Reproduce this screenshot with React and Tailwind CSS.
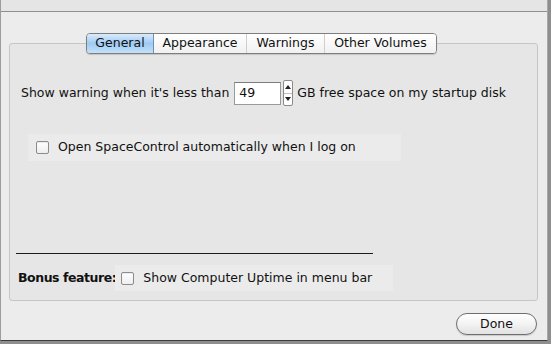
import React from "react";

const font = { fontFamily: '"DejaVu Sans", "Liberation Sans", sans-serif' };

const Checkbox = () => (
  <div className="w-[13px] h-[13px] shrink-0 rounded-[2px] border border-[#8c8c8c] bg-gradient-to-b from-[#ffffff] to-[#eeeeee] shadow-[inset_0_1px_1px_rgba(0,0,0,0.08)]" />
);

const tabs = ["General", "Appearance", "Warnings", "Other Volumes"];

const Tabs = () => (
  <div className="flex h-[21px] ml-[85px] relative z-10 rounded-[4px] border border-[#7e7e7e] overflow-hidden shadow-[0_1px_1px_rgba(0,0,0,0.15)] w-fit">
    {tabs.map((t, i) =>
      i === 0 ? (
        <div
          key={t}
          className="w-[67px] flex items-center justify-center text-[12.5px] text-[#111] bg-gradient-to-b from-[#d8ebfc] via-[#9fcaf3] to-[#c4e2fa] border-r border-[#6f8fb4]"
        >
          {t}
        </div>
      ) : (
        <div
          key={t}
          className={
            "flex items-center justify-center text-[12.5px] text-[#111] bg-gradient-to-b from-[#ffffff] to-[#f1f1f1] " +
            (i === 1 ? "w-[93px] border-r border-[#cfcfcf]" : i === 2 ? "w-[78px] border-r border-[#cfcfcf]" : "w-[111px]")
          }
        >
          {t}
        </div>
      )
    )}
  </div>
);

const Stepper = () => (
  <div className="w-[10px] h-[26px] flex flex-col border border-[#8a8a8a] rounded-[2px] bg-white">
    <div className="flex-1 flex items-center justify-center border-b border-[#bdbdbd]">
      <div className="w-0 h-0 border-l-[3px] border-r-[3px] border-b-[4px] border-l-transparent border-r-transparent border-b-[#222]" />
    </div>
    <div className="flex-1 flex items-center justify-center">
      <div className="w-0 h-0 border-l-[3px] border-r-[3px] border-t-[4px] border-l-transparent border-r-transparent border-t-[#222]" />
    </div>
  </div>
);

export default function App() {
  return (
    <div className="w-[551px] h-[344px] bg-[#8e8e8e] overflow-hidden" style={font}>
      <div className="w-[548px] h-[341px] flex flex-col bg-[#ececec] border-l border-r border-b border-l-[#9c9c9c] border-r-[#a8a8a8] border-b-[#3c3c3c]">
        <div className="h-[12px] bg-[#e5e5e5] border-b border-[#8f8f8f] shrink-0" />
        <div className="pt-[21px] flex flex-col">
          <Tabs />
          <div className="ml-[8px] -mt-[11px] w-[529px] h-[258px] rounded-[3px] border border-[#c6c6c6] bg-[#e6e6e6] flex flex-col">
            <div className="mt-[36px] pl-[11px] flex items-center text-[12.5px] text-[#111]">
              <span>Show warning when it's less than</span>
              <div className="ml-[5px] w-[47px] h-[23px] bg-white border border-[#9a9a9a] border-t-[#7c7c7c] flex items-center pl-[4px]">
                49
              </div>
              <div className="ml-[2px]">
                <Stepper />
              </div>
              <span className="ml-[4px]">GB free space on my startup disk</span>
            </div>
            <div className="mt-[28px] ml-[18px] w-[373px] h-[27px] bg-[#ebebeb] flex items-center pl-[8px] text-[12.5px] text-[#111]">
              <Checkbox />
              <span className="ml-[9px]">Open SpaceControl automatically when I log on</span>
            </div>
            <div className="mt-[92px] ml-[6px] w-[357px] h-[1px] bg-[#1c1c1c]" />
            <div className="mt-[11px] ml-[8px] flex items-center h-[26px] text-[12.5px] text-[#111]">
              <span className="font-bold tracking-[-0.45px]">Bonus feature:</span>
              <div className="ml-[-1px] w-[278px] h-[26px] bg-[#ebebeb] flex items-center pl-[6px]">
                <Checkbox />
                <span className="ml-[9px]">Show Computer Uptime in menu bar</span>
              </div>
            </div>
          </div>
          <div className="mt-[12px] ml-[455px] w-[81px] h-[22px] rounded-full border border-[#6e6e6e] bg-gradient-to-b from-[#ffffff] via-[#f3f3f3] to-[#e2e2e2] flex items-center justify-center text-[12.5px] text-[#111] shadow-[0_1px_1px_rgba(0,0,0,0.15)]">
            Done
          </div>
        </div>
      </div>
    </div>
  );
}
